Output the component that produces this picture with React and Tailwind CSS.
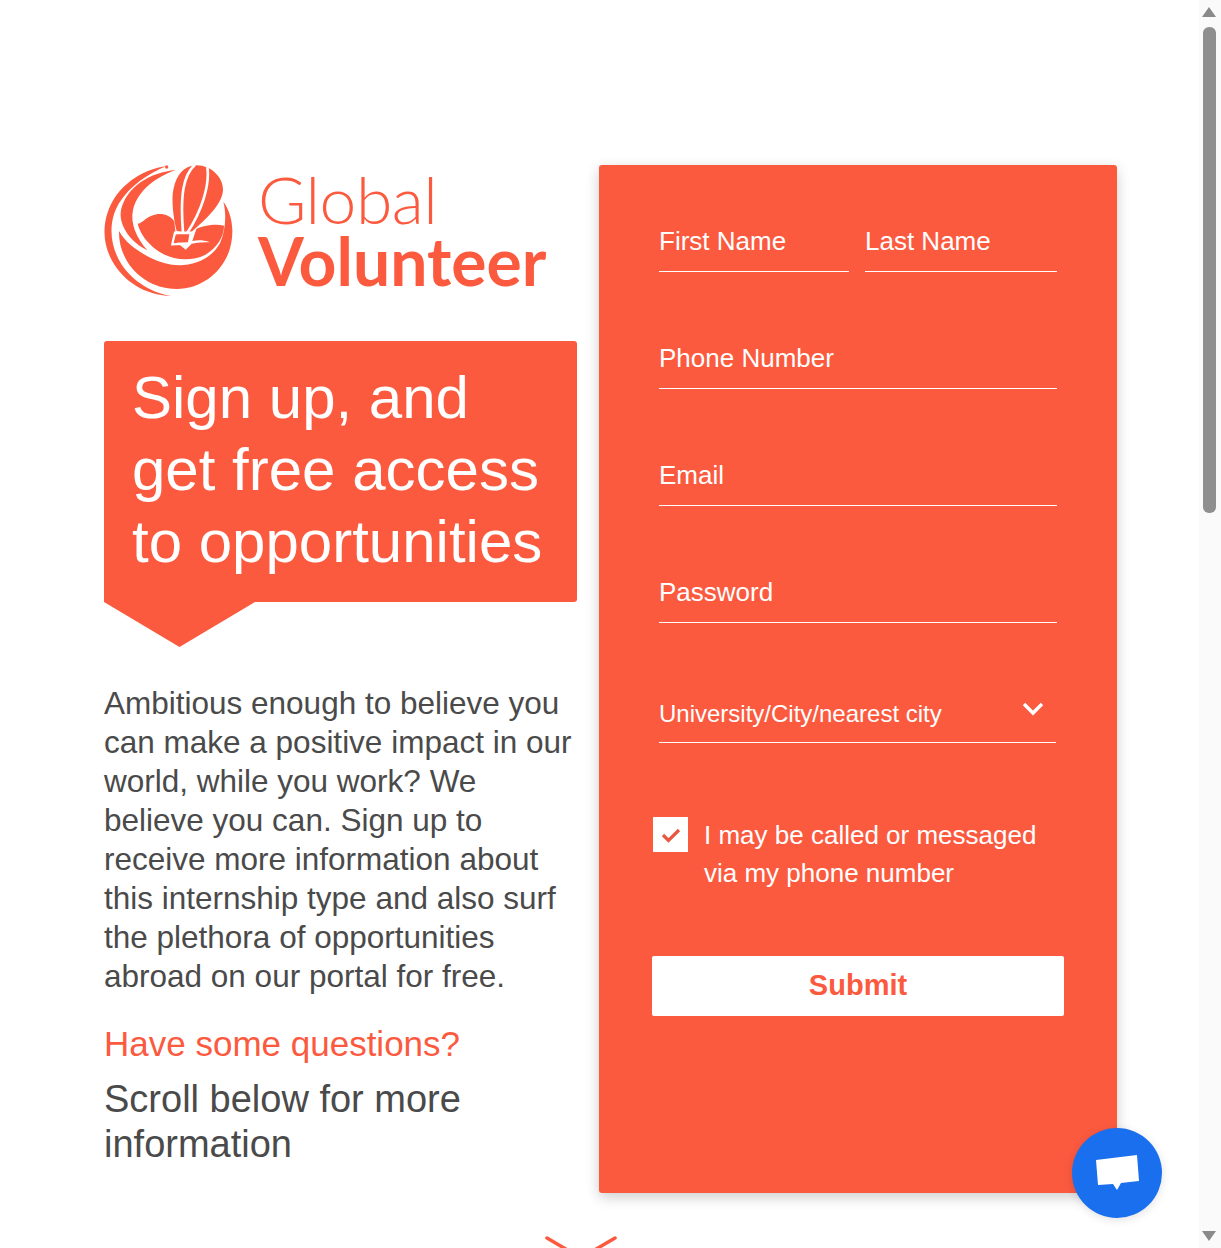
const ORANGE = "#fb5a3f";

function LogoMark() {
    return (
        <svg width="130" height="131" viewBox="27 30 390 393" className="shrink-0">
            {/* outer thin swoosh */}
            <path fill={ORANGE} d="M215 33C150 42 85 80 52 140C22 195 20 260 50 315C85 380 150 420 228 423C165 412 105 375 72 315C42 260 42 195 72 145C105 92 160 55 215 33Z" />
            <circle cx="215" cy="36" r="5" fill={ORANGE} />
            {/* inner crescent */}
            <path fill={ORANGE} d="M243 45C165 52 95 95 78 165C70 210 105 260 157 286C125 250 105 205 114 165C128 105 185 65 243 45Z" />
            {/* bowl */}
            <path fill={ORANGE} d="M72 228C95 270 150 305 200 322C270 345 345 320 375 265C392 225 395 180 385 140C410 175 420 225 405 280C385 350 320 402 245 402C150 402 70 325 72 228Z" />
            {/* flower */}
            <path fill={ORANGE} d="M128 206C140 205 150 190 170 182C195 172 225 178 238 200L245 262L272 284L290 266C315 262 335 262 345 262C325 255 310 255 292 258L304 222C325 212 360 206 387 212C388 245 365 280 330 300C285 322 225 315 185 285C155 262 135 235 128 206Z" />
            {/* balloon */}
            <path fill={ORANGE} d="M300 31C345 28 385 65 384 105C383 150 320 205 283 236L245 228C235 190 228 130 236 100C245 60 265 35 300 31Z" />
            <path fill="none" stroke="#fff" strokeWidth="8" d="M300 29C265 60 255 120 264 232M337 36C345 90 320 170 275 236" />
            <path fill="none" stroke="#fff" strokeWidth="7" d="M240 233L288 233L282 266L232 268Z" />
            <path fill={ORANGE} d="M244 238L283 238L279 262L237 263Z" />
        </svg>
    );
}

function Field({ label, className }) {
    return (
        <div className={`h-[60px] border-b border-white flex items-center text-[26px] text-white ${className}`}>
            {label}
        </div>
    );
}

export default function App() {
    return (
        <div className="relative h-[1248px] overflow-hidden bg-white font-['Liberation_Sans',Arial,sans-serif]">
            <div className="pt-[165px] pl-[104px] pr-[82px]">
                <div className="flex gap-[22px]">
                    <div className="w-[473px]">
                        <div className="flex h-[131px] gap-[24px]" style={{ color: ORANGE }}>
                            <LogoMark />
                            <div className="pt-[1px] font-['Lato',sans-serif]">
                                <div className="text-[66px] leading-[66px] font-light tracking-[-0.5px]">Global</div>
                                <div className="text-[66px] leading-[58px] font-bold">Volunteer</div>
                            </div>
                        </div>

                        <div className="mt-[45px] bg-[#fb5a3f] rounded-t-[3px] rounded-br-[3px] pl-[28px] pt-[21px] pb-[24px] text-[60px] leading-[72px] text-white">
                            Sign up, and<br />get free access<br />to opportunities
                        </div>
                        <div className="w-[151px] h-[45px] bg-[#fb5a3f] [clip-path:polygon(0_0,100%_0,50%_100%)]"></div>

                        <p className="mt-[37px] text-[31.5px] leading-[39px] text-[#4a4a4a]">
                            Ambitious enough to believe you<br />
                            can make a positive impact in our<br />
                            world, while you work? We<br />
                            believe you can. Sign up to<br />
                            receive more information about<br />
                            this internship type and also surf<br />
                            the plethora of opportunities<br />
                            abroad on our portal for free.
                        </p>
                        <div className="mt-[25px] text-[35px] leading-[45px] text-[#fb5a3f]">Have some questions?</div>
                        <div className="mt-[11px] text-[38px] leading-[45px] text-[#4a4a4a]">
                            Scroll below for more<br />information
                        </div>
                    </div>

                    <div className="w-[518px] h-[1028px] bg-[#fb5a3f] rounded-[3px] shadow-[0_4px_14px_rgba(0,0,0,0.2)] px-[60px] pt-[47px]">
                        <div className="flex gap-[16px]">
                            <Field label="First Name" className="w-[190px]" />
                            <Field label="Last Name" className="w-[192px]" />
                        </div>
                        <Field label="Phone Number" className="mt-[57px]" />
                        <Field label="Email" className="mt-[57px]" />
                        <Field label="Password" className="mt-[57px]" />

                        <div className="mt-[60px] h-[60px] w-[397px] border-b border-white flex items-center justify-between text-[24px] text-white">
                            <span className="pt-[2px]">University/City/nearest city</span>
                            <svg width="22" height="14" viewBox="0 0 22 14" className="mr-[12px] mb-[8px]">
                                <path d="M2 2L11 11L20 2" fill="none" stroke="#fff" strokeWidth="3.4" />
                            </svg>
                        </div>

                        <div className="-ml-[6px] mt-[74px] flex gap-[16px]">
                            <div className="w-[35px] h-[35px] bg-white flex items-center justify-center shrink-0">
                                <svg width="20" height="16" viewBox="0 0 20 16">
                                    <path d="M2 8L7.5 13.5L18 3" fill="none" stroke="#e9573f" strokeWidth="3.2" />
                                </svg>
                            </div>
                            <div className="-mt-[1px] text-[26px] leading-[38px] text-white">
                                I may be called or messaged<br />via my phone number
                            </div>
                        </div>

                        <div className="-ml-[7px] mt-[64px] w-[412px] h-[60px] bg-white rounded-[2px] flex items-center justify-center text-[29px] font-bold text-[#fb5a3f]">
                            Submit
                        </div>
                    </div>
                </div>

                <svg width="72" height="30" viewBox="0 0 72 30" className="mt-[43px] ml-[441px]">
                    <path d="M2 2L36 22L70 2" fill="none" stroke="#fb5a3f" strokeWidth="3.5" strokeLinecap="round" />
                </svg>
            </div>

            {/* chat bubble */}
            <div className="absolute left-[1072px] top-[1128px] w-[90px] h-[90px] rounded-full bg-[#1a6fee] shadow-[0_2px_10px_rgba(0,0,0,0.12)] flex items-center justify-center">
                <svg width="44" height="38" viewBox="0 0 44 38">
                    <path fill="#fff" d="M1 6L42 1L44 27L26 29L22 36L18 30L3 31Z" />
                </svg>
            </div>

            {/* scrollbar */}
            <div className="absolute right-0 top-0 bottom-0 w-[22px] bg-[#fafafa]">
                <svg width="14" height="10" viewBox="0 0 14 10" className="absolute left-[3px] top-[7px]">
                    <path fill="#8a8a8a" d="M7 0L14 10H0Z" />
                </svg>
                <div className="absolute left-[4px] top-[27px] w-[13px] h-[486px] rounded-[6px] bg-[#8f8f8f]"></div>
                <svg width="14" height="10" viewBox="0 0 14 10" className="absolute left-[3px] bottom-[7px]">
                    <path fill="#8a8a8a" d="M7 10L14 0H0Z" />
                </svg>
            </div>
        </div>
    );
}
